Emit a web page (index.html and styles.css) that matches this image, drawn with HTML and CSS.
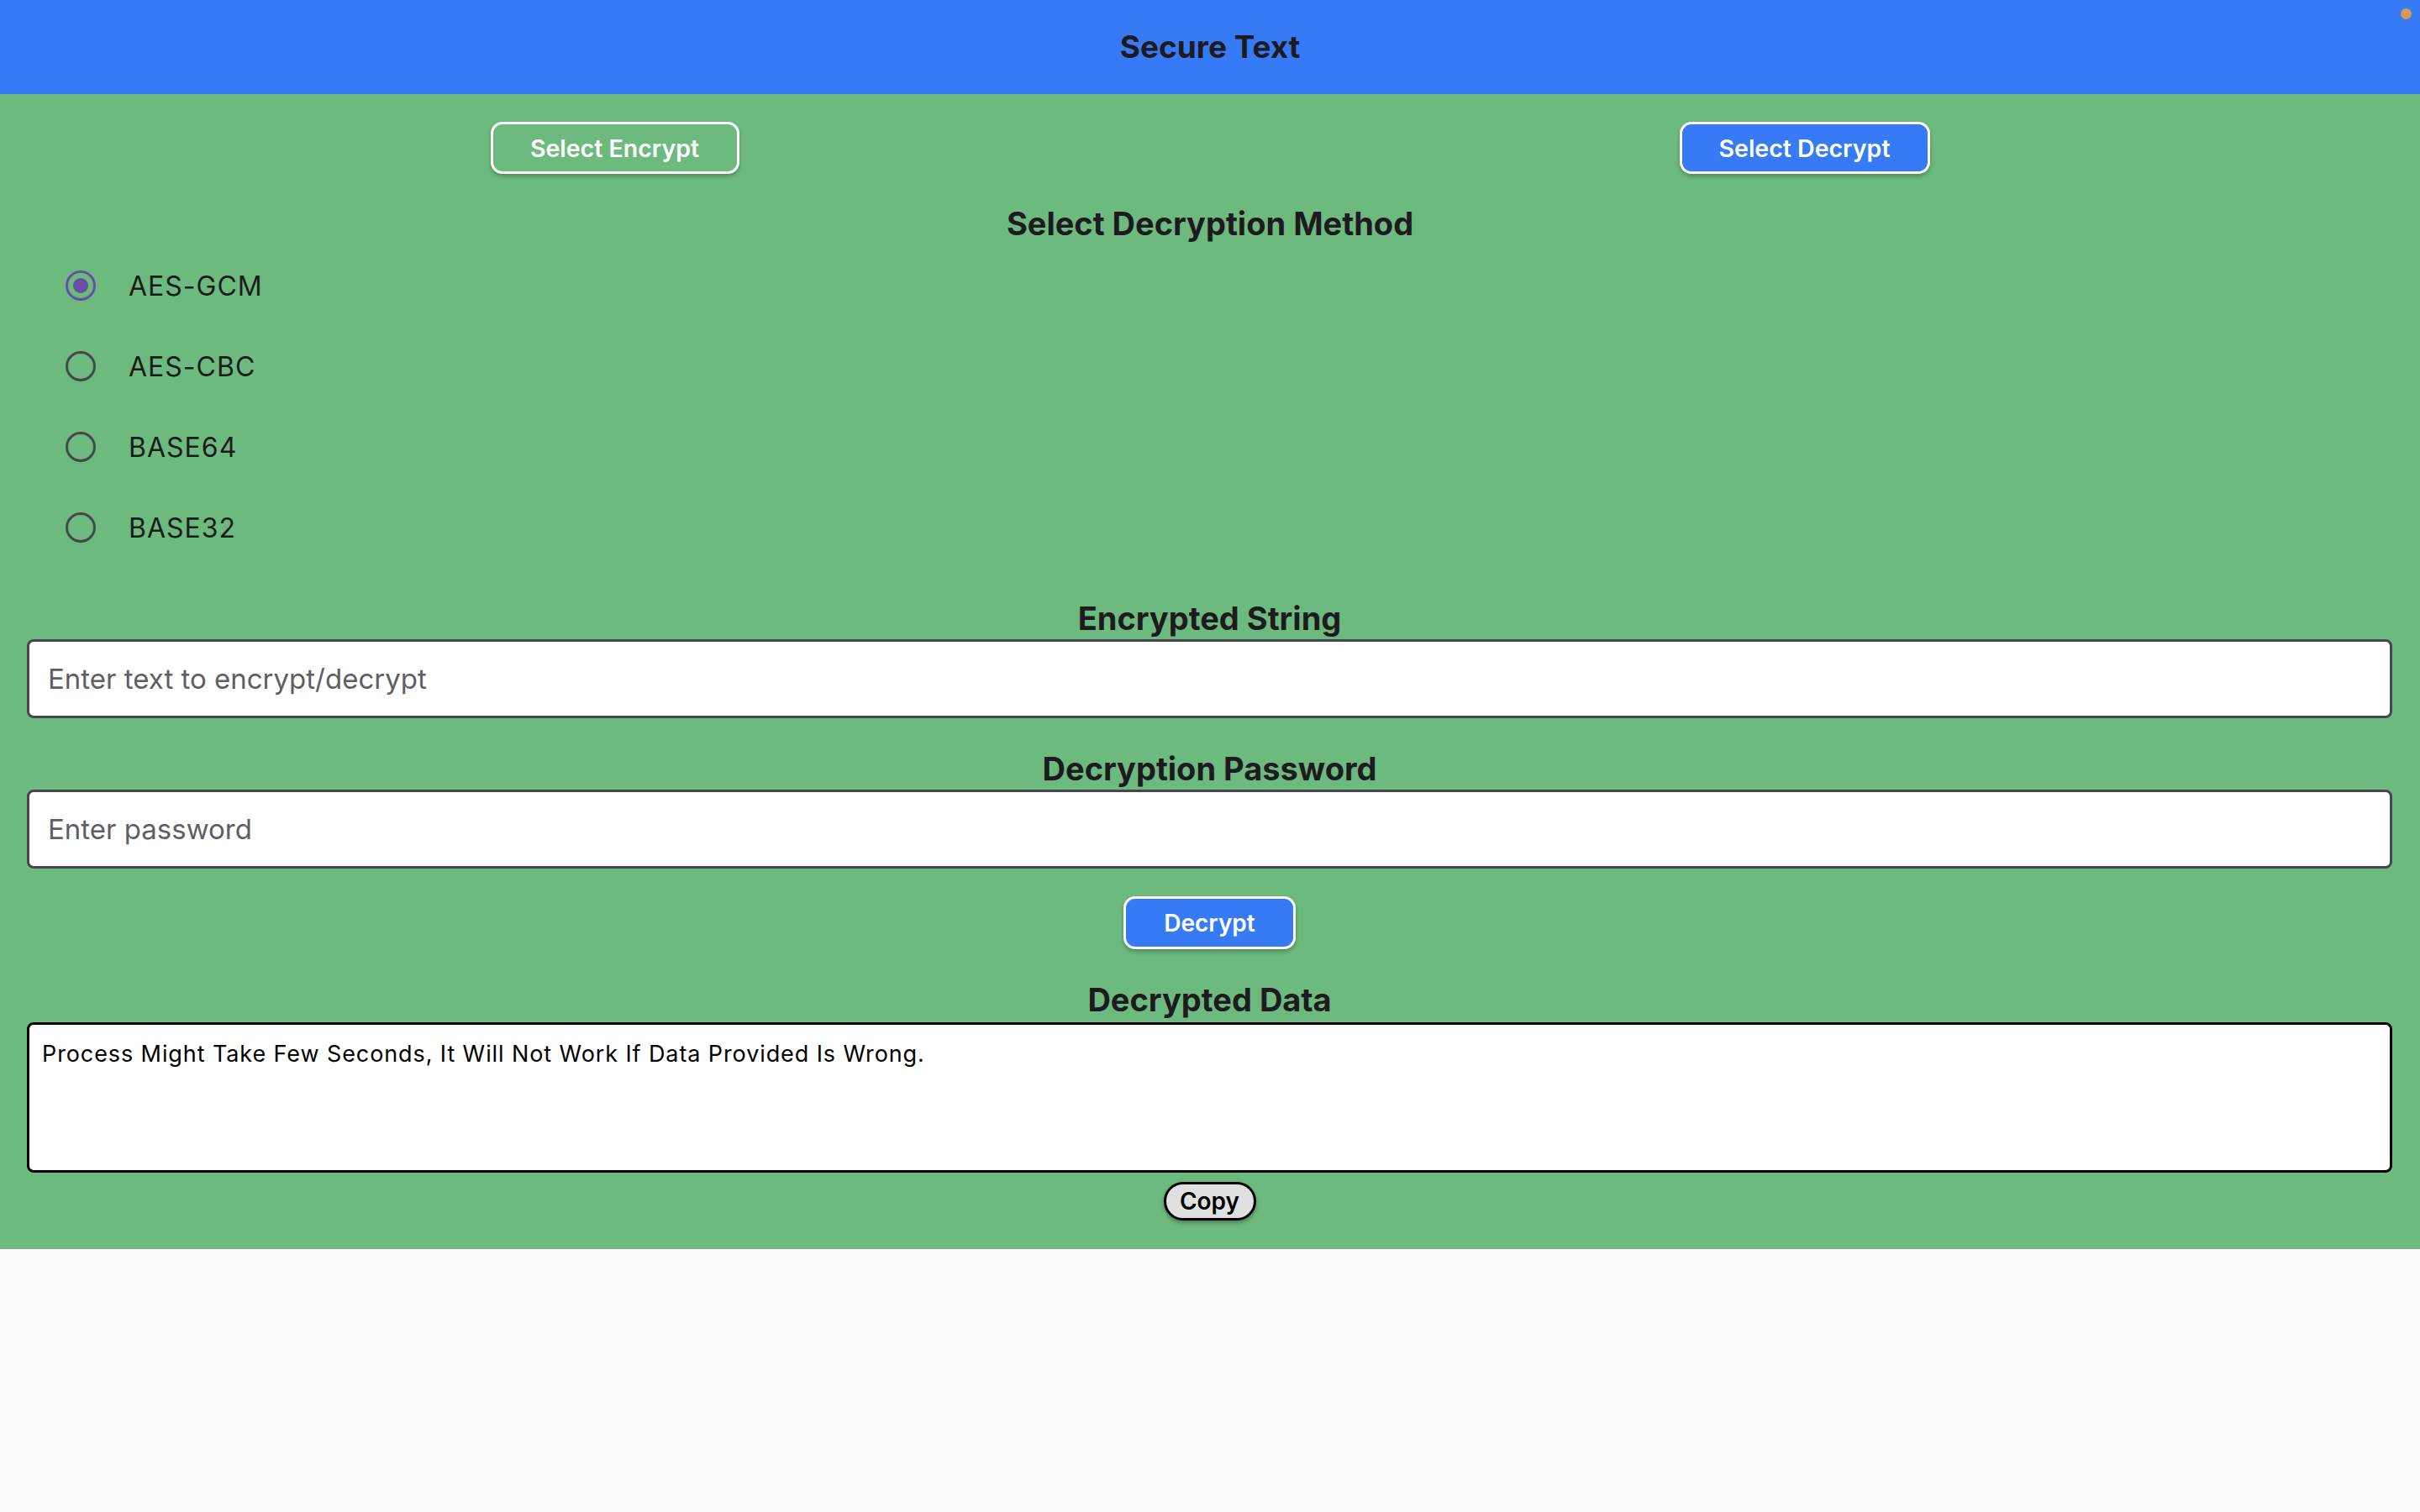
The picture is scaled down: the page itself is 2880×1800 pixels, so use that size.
FILE: index.html
```html
<!DOCTYPE html>
<html lang="en">
<head>
<meta charset="utf-8">
<title>Secure Text</title>
<link rel="stylesheet" href="styles.css">
</head>
<body>
<header class="app-header">
  <h1 class="app-title">Secure Text</h1>
  <span class="status-dot"></span>
</header>
<main class="panel">
  <div class="mode-row">
    <button class="mode-btn mode-btn--outline">Select Encrypt</button>
    <button class="mode-btn mode-btn--filled">Select Decrypt</button>
  </div>
  <h2 class="section-title section-title--method">Select Decryption Method</h2>
  <div class="radio-list">
    <div class="radio-row"><span class="radio radio--checked"></span><span class="radio-label">AES-GCM</span></div>
    <div class="radio-row"><span class="radio"></span><span class="radio-label">AES-CBC</span></div>
    <div class="radio-row"><span class="radio"></span><span class="radio-label">BASE64</span></div>
    <div class="radio-row"><span class="radio"></span><span class="radio-label">BASE32</span></div>
  </div>
  <div class="form">
    <h2 class="section-title section-title--string">Encrypted String</h2>
    <input class="text-field" type="text" placeholder="Enter text to encrypt/decrypt">
    <h2 class="section-title section-title--password">Decryption Password</h2>
    <input class="text-field" type="text" placeholder="Enter password">
    <div class="center-row">
      <button class="action-btn">Decrypt</button>
    </div>
    <h2 class="section-title section-title--result">Decrypted Data</h2>
    <div class="result-box">Process Might Take Few Seconds, It Will Not Work If Data Provided Is Wrong.</div>
    <div class="center-row">
      <button class="copy-btn">Copy</button>
    </div>
  </div>
</main>
</body>
</html>
```

FILE: styles.css
```css
* { box-sizing: border-box; }

body {
  margin: 0;
  background: #fcf8fd;
  font-family: Inter, "Noto Sans", sans-serif;
  color: #1d1b20;
}

.app-header {
  position: relative;
  height: 112px;
  background: #367af5;
  display: flex;
  align-items: center;
  justify-content: center;
}

.app-title {
  margin: 0;
  font-size: 37px;
  font-weight: 700;
  line-height: 1.21;
  color: #1d1b20;
}

.status-dot {
  position: absolute;
  top: 10px;
  right: 10px;
  width: 13px;
  height: 13px;
  border-radius: 50%;
  background: #d39b5a;
}

.panel {
  background: #6dba7e;
  padding-bottom: 34px;
}

.mode-row {
  display: flex;
  justify-content: space-around;
  padding: 33px 24px 0;
}

.mode-btn {
  height: 62px;
  border: 3px solid #ffffff;
  border-radius: 14px;
  font-family: Inter, "Noto Sans", sans-serif;
  font-size: 28.5px;
  font-weight: 600;
  color: #ffffff;
  padding: 0;
  box-shadow: 0 3px 5px rgba(0, 0, 0, 0.25);
}

.mode-btn--outline {
  width: 296px;
  background: transparent;
}

.mode-btn--filled {
  width: 298px;
  background: #367af5;
}

.section-title {
  margin: 0;
  text-align: center;
  font-size: 38px;
  font-weight: 700;
  line-height: 44px;
  color: #1d1b20;
}

.section-title--method { margin-top: 37px; }
.section-title--string { margin-top: 38px; margin-bottom: 3px; }
.section-title--password { margin-top: 38px; margin-bottom: 3px; }
.section-title--result { margin-top: 38px; margin-bottom: 5px; }

.radio-list {
  margin-top: 4px;
  display: flex;
  flex-direction: column;
}

.radio-row {
  height: 96px;
  display: flex;
  align-items: center;
  gap: 39px;
  padding-left: 78px;
}

.radio {
  position: relative;
  width: 36px;
  height: 36px;
  border-radius: 50%;
  border: 3.5px solid #49454f;
  flex: none;
}

.radio--checked {
  border-color: #6750a4;
}

.radio--checked::after {
  content: "";
  position: absolute;
  left: 50%;
  top: 50%;
  width: 18px;
  height: 18px;
  margin: -9px 0 0 -9px;
  border-radius: 50%;
  background: #6750a4;
}

.radio-label {
  font-size: 32px;
  letter-spacing: 1px;
  color: #1d1b20;
}

.form {
  padding: 0 33px 0 32px;
}

.text-field {
  display: block;
  width: 100%;
  height: 94px;
  border: 3px solid #49454f;
  border-radius: 8px;
  background: #ffffff;
  padding: 0 22px;
  font-family: Inter, "Noto Sans", sans-serif;
  font-size: 33px;
  color: #1d1b20;
  outline: none;
}

.text-field::placeholder {
  color: #5f5e64;
}

.center-row {
  display: flex;
  justify-content: center;
}

.action-btn {
  margin-top: 33px;
  width: 205px;
  height: 63px;
  background: #367af5;
  border: 3px solid #ffffff;
  border-radius: 14px;
  color: #ffffff;
  font-family: Inter, "Noto Sans", sans-serif;
  font-size: 28px;
  font-weight: 600;
  padding: 0;
  box-shadow: 0 3px 5px rgba(0, 0, 0, 0.25);
}

.result-box {
  height: 179px;
  background: #ffffff;
  border: 3px solid #000000;
  border-radius: 8px;
  padding: 19px 15px;
  font-size: 27px;
  letter-spacing: 0.9px;
  line-height: 32px;
  color: #000000;
}

.copy-btn {
  margin-top: 11px;
  width: 110px;
  height: 46px;
  background: #e0e0e0;
  border: 3px solid #000000;
  border-radius: 23px;
  color: #000000;
  font-family: Inter, "Noto Sans", sans-serif;
  font-size: 28px;
  font-weight: 600;
  padding: 0;
  box-shadow: 0 3px 5px rgba(0, 0, 0, 0.3);
}
```
